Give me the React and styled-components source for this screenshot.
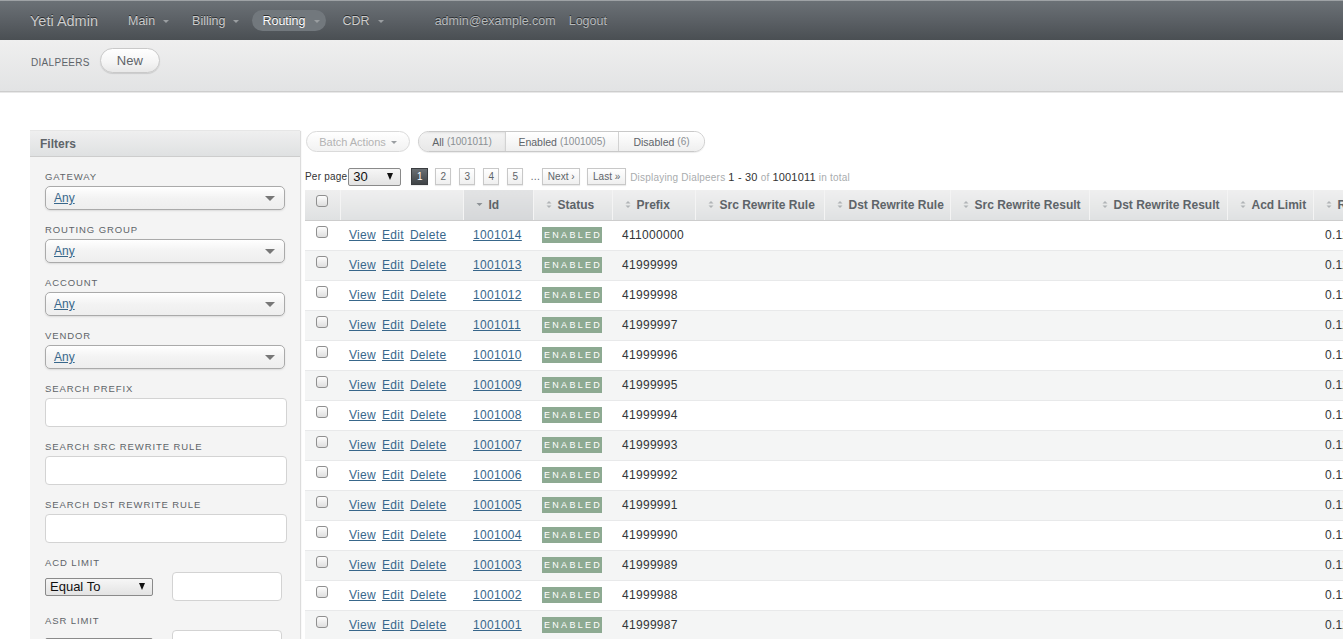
import React from "react";
import styled, { createGlobalStyle, css } from "styled-components";

const GlobalStyle = createGlobalStyle`
  html, body {
    margin: 0;
    padding: 0;
    overflow: hidden;
    background: #fff;
  }
  body {
    font-family: "Liberation Sans", Arial, sans-serif;
    font-size: 12px;
    color: #323537;
  }
  * { box-sizing: border-box; }
`;

const Page = styled.div`
  width: 100vw;
  height: 639px;
  overflow: hidden;
`;

/* ---------- top header ---------- */
const Header = styled.div`
  height: 40px;
  display: flex;
  align-items: center;
  padding-left: 30px;
  background: linear-gradient(180deg, #6b7176 0%, #5b6065 50%, #4a4f53 100%);
  border-top: 1px solid #9ea2a5;
  color: #cdcdcd;
  text-shadow: 0 -1px 0 #2c2f31;
  font-size: 12.5px;
`;

const SiteTitle = styled.div`
  font-size: 14.5px;
  color: #cdcdcd;
  margin-right: 20px;
`;

const NavItem = styled.div`
  display: flex;
  align-items: center;
  gap: 8px;
  height: 21px;
  padding: 0 6px 0 10px;
  margin-right: ${(p) => p.$mr || 7}px;
  border-radius: 11px;
  color: ${(p) => (p.$active ? "#fff" : "#cdcdcd")};
  background: ${(p) => (p.$active ? "#72787d" : "transparent")};
`;

const Caret = styled.span`
  width: 0;
  height: 0;
  border-left: 3px solid transparent;
  border-right: 3px solid transparent;
  border-top: 3px solid #9a9ea1;
  margin-top: 1px;
`;

const UserLink = styled.div`
  color: #b8bbbd;
  font-size: 12.5px;
  margin-right: 13px;
`;

/* ---------- title bar ---------- */
const TitleBar = styled.div`
  height: 52px;
  display: flex;
  align-items: flex-start;
  padding: 8px 0 0 31px;
  gap: 10px;
  background: linear-gradient(180deg, #efefef 0%, #e2e3e4 100%);
  border-bottom: 1px solid #cdcdcd;
  box-shadow: 0 1px 0 #e8e8e8;
`;

const PageTitle = styled.div`
  margin-top: 9px;
  font-size: 10px;
  letter-spacing: 0.3px;
  color: #5e6469;
`;

const PillButton = styled.div`
  width: 60px;
  height: 25px;
  display: flex;
  align-items: center;
  justify-content: center;
  border-radius: 13px;
  border: 1px solid #c9c9c9;
  background: linear-gradient(180deg, #ffffff 0%, #f4f4f4 60%, #e8e8e8 100%);
  box-shadow: 0 1px 1px rgba(0, 0, 0, 0.12);
  color: #5e6469;
  font-size: 13px;
`;

/* ---------- content ---------- */
const Content = styled.div`
  display: flex;
  gap: 5px;
  padding: 39px 0 0 30px;
`;

const Sidebar = styled.div`
  flex: 0 0 270px;
  background: #f4f4f4;
  box-shadow: 1px 0 1px #dcdcdc;
  height: 520px;
`;

const PanelHead = styled.div`
  height: 26px;
  display: flex;
  align-items: center;
  padding-left: 10px;
  font-weight: bold;
  font-size: 12px;
  color: #5e6469;
  background: linear-gradient(180deg, #efefef 0%, #dfe1e2 100%);
  border-bottom: 1px solid #cdcdcd;
  box-shadow: 0 -1px 0 #e6e6e6;
`;

const FilterBody = styled.div`
  padding: 14px 0 0 15px;
  display: flex;
  flex-direction: column;
`;

const FilterLabel = styled.div`
  font-size: 9.5px;
  line-height: 11px;
  letter-spacing: 0.9px;
  color: #5e6469;
  text-transform: uppercase;
  margin-bottom: 4px;
`;

const FilterRow = styled.div`
  margin-bottom: ${(p) => p.$mb || 14}px;
`;

const ChosenSelect = styled.div`
  width: 240px;
  height: 24px;
  display: flex;
  align-items: center;
  justify-content: space-between;
  padding: 0 9px 0 8px;
  border: 1px solid #aaa;
  border-radius: 5px;
  background: linear-gradient(180deg, #ffffff 0%, #f3f3f3 50%, #eeeeee 100%);
  box-shadow: 0 1px 2px rgba(0, 0, 0, 0.1);
`;

const DownTri = styled.span`
  width: 0;
  height: 0;
  border-left: 5px solid transparent;
  border-right: 5px solid transparent;
  border-top: 5px solid ${(p) => p.$color || "#777"};
`;

const Link = styled.a`
  color: #38678b;
  text-decoration: underline;
  font-size: ${(p) => p.$size || 12}px;
`;

const TextInput = styled.div`
  width: ${(p) => p.$w || 242}px;
  height: 29px;
  background: #fff;
  border: 1px solid #d3d3d3;
  border-radius: 4px;
`;

const LimitRow = styled.div`
  display: flex;
  align-items: center;
  gap: 19px;
`;

const NativeSelect = styled.div`
  width: ${(p) => p.$w}px;
  height: 18px;
  display: flex;
  align-items: center;
  justify-content: space-between;
  padding: 0 7px 0 4px;
  border: 1px solid #8a8a8a;
  border-radius: 2px;
  background: linear-gradient(180deg, #f6f6f6 0%, #e3e3e3 100%);
  color: #111;
  font-size: 13px;
  font-family: "Liberation Sans", Arial, sans-serif;
  ${(p) =>
    p.$cut &&
    css`
      margin-top: 4px;
    `}
`;

const SmallArrow = styled.span`
  width: 0;
  height: 0;
  border-left: 3.5px solid transparent;
  border-right: 3.5px solid transparent;
  border-top: 7px solid #111;
`;

/* ---------- main ---------- */
const Main = styled.div`
  flex: 0 0 auto;
  display: flex;
  flex-direction: column;
`;

const ActionBar = styled.div`
  display: flex;
  align-items: center;
  gap: 8px;
  padding-left: 1px;
  height: 21px;
`;

const BatchButton = styled.div`
  height: 21px;
  width: 104px;
  display: flex;
  align-items: center;
  justify-content: center;
  gap: 5px;
  border: 1px solid #dadada;
  border-radius: 11px;
  background: linear-gradient(180deg, #ffffff 0%, #f2f2f2 100%);
  color: #b3b3b3;
  font-size: 11px;
`;

const ScopeGroup = styled.div`
  display: flex;
  height: 21px;
  border: 1px solid #c9c9c9;
  border-radius: 11px;
  overflow: hidden;
  box-shadow: 0 1px 1px rgba(0, 0, 0, 0.08);
`;

const Scope = styled.div`
  width: ${(p) => p.$w}px;
  display: flex;
  align-items: center;
  justify-content: center;
  gap: 3px;
  font-size: 10.5px;
  color: #5e6469;
  border-left: ${(p) => (p.$first ? "none" : "1px solid #d2d2d2")};
  background: ${(p) =>
    p.$selected
      ? "linear-gradient(180deg, #f4f4f4 0%, #e8e8e8 100%)"
      : "linear-gradient(180deg, #ffffff 0%, #efefef 100%)"};
  box-shadow: ${(p) => (p.$selected ? "inset 0 1px 2px rgba(0,0,0,0.08)" : "none")};
`;

const Count = styled.span`
  color: #8a8f93;
  font-size: 10px;
`;

const Pager = styled.div`
  display: flex;
  align-items: center;
  margin-top: 15px;
  height: 19px;
  font-size: 10px;
`;

const PerPage = styled.span`
  color: #333;
  letter-spacing: 0.2px;
  margin-right: 1px;
`;

const PageLink = styled.div`
  min-width: ${(p) => p.$w || 16}px;
  height: 17px;
  padding: 0 4px;
  margin-left: ${(p) => p.$ml || 8}px;
  display: flex;
  align-items: center;
  justify-content: center;
  font-size: 10px;
  border: 1px solid ${(p) => (p.$current ? "#3a3d40" : "#c8c8c8")};
  color: ${(p) => (p.$current ? "#fff" : "#5e6469")};
  background: ${(p) =>
    p.$current
      ? "linear-gradient(180deg, #6a6f73 0%, #3f4346 100%)"
      : "linear-gradient(180deg, #ffffff 0%, #efefef 100%)"};
  box-shadow: 0 1px 1px rgba(0, 0, 0, 0.08);
`;

const Gap = styled.span`
  margin-left: 7px;
  color: #5e6469;
`;

const Info = styled.span`
  margin-left: 4px;
  color: #a9acae;
  letter-spacing: 0.2px;
  b {
    color: #333;
    font-weight: normal;
    font-size: 11px;
  }
`;

const Table = styled.table`
  margin-top: 4px;
  border-collapse: collapse;
  table-layout: fixed;
  width: 1150px;
`;

const Th = styled.th`
  height: 30px;
  padding: 0 0 0 ${(p) => (p.$pad != null ? p.$pad : 12)}px;
  text-align: left;
  vertical-align: ${(p) => (p.$top ? "top" : "middle")};
  font-size: 12px;
  font-weight: bold;
  color: #5e6469;
  white-space: nowrap;
  background: ${(p) =>
    p.$sorted
      ? "linear-gradient(180deg, #e2e3e4 0%, #d5d7d9 100%)"
      : "linear-gradient(180deg, #efefef 0%, #dfe1e2 100%)"};
  border-left: 1px solid #d5d7d9;
  border-right: 1px solid #f4f4f4;
  border-bottom: 1px solid #cdcdcd;
  &:first-child {
    border-left: none;
  }
`;

const ThInner = styled.div`
  display: flex;
  align-items: center;
  gap: 6px;
`;

const Tr = styled.tr`
  height: 30px;
  background: ${(p) => (p.$odd ? "#f4f5f5" : "#fff")};
`;

const Td = styled.td`
  padding: 0 0 0 ${(p) => (p.$pad != null ? p.$pad : 10)}px;
  vertical-align: ${(p) => (p.$top ? "top" : "middle")};
  border-bottom: 1px solid #e8e9ea;
  white-space: nowrap;
  overflow: hidden;
  font-size: 12px;
  color: #323537;
  letter-spacing: 0.3px;
`;

const Checkbox = styled.span`
  display: inline-block;
  width: 12px;
  height: 12px;
  margin-top: 5px;
  border: 1px solid #8f8f8f;
  border-radius: 3px;
  background: linear-gradient(180deg, #fdfdfd 0%, #dedede 100%);
  vertical-align: top;
`;

const Actions = styled.div`
  display: flex;
  gap: 6px;
`;

const StatusTag = styled.span`
  display: inline-block;
  width: 60px;
  height: 16px;
  line-height: 16px;
  text-align: center;
  background: #8daa92;
  color: #fff;
  font-size: 9px;
  letter-spacing: 2.3px;
  padding-left: 2px;
`;

const SortIcon = ({ single }) =>
  single ? (
    <svg width="7" height="5" viewBox="0 0 7 5">
      <path d="M0.5 1 L6.5 1 L3.5 4 Z" fill="#8d9196" />
    </svg>
  ) : (
    <svg width="6" height="9" viewBox="0 0 6 9">
      <path d="M0.5 3.5 L3 1 L5.5 3.5 Z" fill="#b0b3b6" />
      <path d="M0.5 5.5 L3 8 L5.5 5.5 Z" fill="#b0b3b6" />
    </svg>
  );

const columns = [
  { key: "cb", w: 35 },
  { key: "act", w: 123 },
  { key: "id", w: 70, title: "Id", sorted: true },
  { key: "status", w: 79, title: "Status" },
  { key: "prefix", w: 83, title: "Prefix" },
  { key: "srr", w: 129, title: "Src Rewrite Rule" },
  { key: "drr", w: 126, title: "Dst Rewrite Rule" },
  { key: "srres", w: 139, title: "Src Rewrite Result" },
  { key: "drres", w: 138, title: "Dst Rewrite Result" },
  { key: "acd", w: 86, title: "Acd Limit" },
  { key: "rate", w: 142, title: "Rate" },
];

const rows = Array.from({ length: 14 }, (_, i) => ({
  id: 1001014 - i,
  prefix: i === 0 ? "411000000" : String(41999999 - (i - 1)),
}));

const filters = ["Gateway", "Routing Group", "Account", "Vendor"];
const searches = ["Search Prefix", "Search Src Rewrite Rule", "Search Dst Rewrite Rule"];

export default function App() {
  return (
    <Page>
      <GlobalStyle />
      <Header>
        <SiteTitle>Yeti Admin</SiteTitle>
        <NavItem>
          Main <Caret />
        </NavItem>
        <NavItem>
          Billing <Caret />
        </NavItem>
        <NavItem $active>
          Routing <Caret />
        </NavItem>
        <NavItem $mr={45}>
          CDR <Caret />
        </NavItem>
        <UserLink>admin@example.com</UserLink>
        <UserLink>Logout</UserLink>
      </Header>

      <TitleBar>
        <PageTitle>DIALPEERS</PageTitle>
        <PillButton>New</PillButton>
      </TitleBar>

      <Content>
        <Sidebar>
          <PanelHead>Filters</PanelHead>
          <FilterBody>
            {filters.map((f) => (
              <FilterRow key={f} $mb={14}>
                <FilterLabel>{f}</FilterLabel>
                <ChosenSelect>
                  <Link>Any</Link>
                  <DownTri />
                </ChosenSelect>
              </FilterRow>
            ))}
            {searches.map((s) => (
              <FilterRow key={s} $mb={14}>
                <FilterLabel>{s}</FilterLabel>
                <TextInput />
              </FilterRow>
            ))}
            <FilterRow $mb={14}>
              <FilterLabel>Acd Limit</FilterLabel>
              <LimitRow>
                <NativeSelect $w={108}>
                  Equal To <SmallArrow />
                </NativeSelect>
                <TextInput $w={110} />
              </LimitRow>
            </FilterRow>
            <FilterRow>
              <FilterLabel>Asr Limit</FilterLabel>
              <LimitRow>
                <NativeSelect $w={108} $cut>
                  Equal To <SmallArrow />
                </NativeSelect>
                <TextInput $w={110} />
              </LimitRow>
            </FilterRow>
          </FilterBody>
        </Sidebar>

        <Main>
          <ActionBar>
            <BatchButton>
              Batch Actions <Caret />
            </BatchButton>
            <ScopeGroup>
              <Scope $w={86} $first $selected>
                All <Count>(1001011)</Count>
              </Scope>
              <Scope $w={113}>
                Enabled <Count>(1001005)</Count>
              </Scope>
              <Scope $w={86}>
                Disabled <Count>(6)</Count>
              </Scope>
            </ScopeGroup>
          </ActionBar>

          <Pager>
            <PerPage>Per page</PerPage>
            <NativeSelect $w={53}>
              30 <SmallArrow />
            </NativeSelect>
            <PageLink $current $ml={10} $w={17}>
              1
            </PageLink>
            <PageLink $ml={7}>2</PageLink>
            <PageLink>3</PageLink>
            <PageLink>4</PageLink>
            <PageLink>5</PageLink>
            <Gap>…</Gap>
            <PageLink $ml={2} $w={38}>
              Next ›
            </PageLink>
            <PageLink $ml={7} $w={39}>
              Last »
            </PageLink>
            <Info>
              Displaying Dialpeers <b>1 - 30</b> of <b>1001011</b> in total
            </Info>
          </Pager>

          <Table>
            <colgroup>
              {columns.map((c) => (
                <col key={c.key} style={{ width: c.w }} />
              ))}
            </colgroup>
            <thead>
              <tr>
                <Th $pad={11} $top>
                  <Checkbox />
                </Th>
                <Th />
                {columns.slice(2).map((c) => (
                  <Th key={c.key} $sorted={c.sorted}>
                    <ThInner>
                      <SortIcon single={c.sorted} />
                      {c.title}
                    </ThInner>
                  </Th>
                ))}
              </tr>
            </thead>
            <tbody>
              {rows.map((r, i) => (
                <Tr key={r.id} $odd={i % 2 === 1}>
                  <Td $pad={11} $top>
                    <Checkbox />
                  </Td>
                  <Td $pad={9}>
                    <Actions>
                      <Link>View</Link>
                      <Link>Edit</Link>
                      <Link>Delete</Link>
                    </Actions>
                  </Td>
                  <Td>
                    <Link>{r.id}</Link>
                  </Td>
                  <Td $pad={9}>
                    <StatusTag>ENABLED</StatusTag>
                  </Td>
                  <Td>{r.prefix}</Td>
                  <Td />
                  <Td />
                  <Td />
                  <Td />
                  <Td />
                  <Td $pad={12}>0.1100</Td>
                </Tr>
              ))}
            </tbody>
          </Table>
        </Main>
      </Content>
    </Page>
  );
}
